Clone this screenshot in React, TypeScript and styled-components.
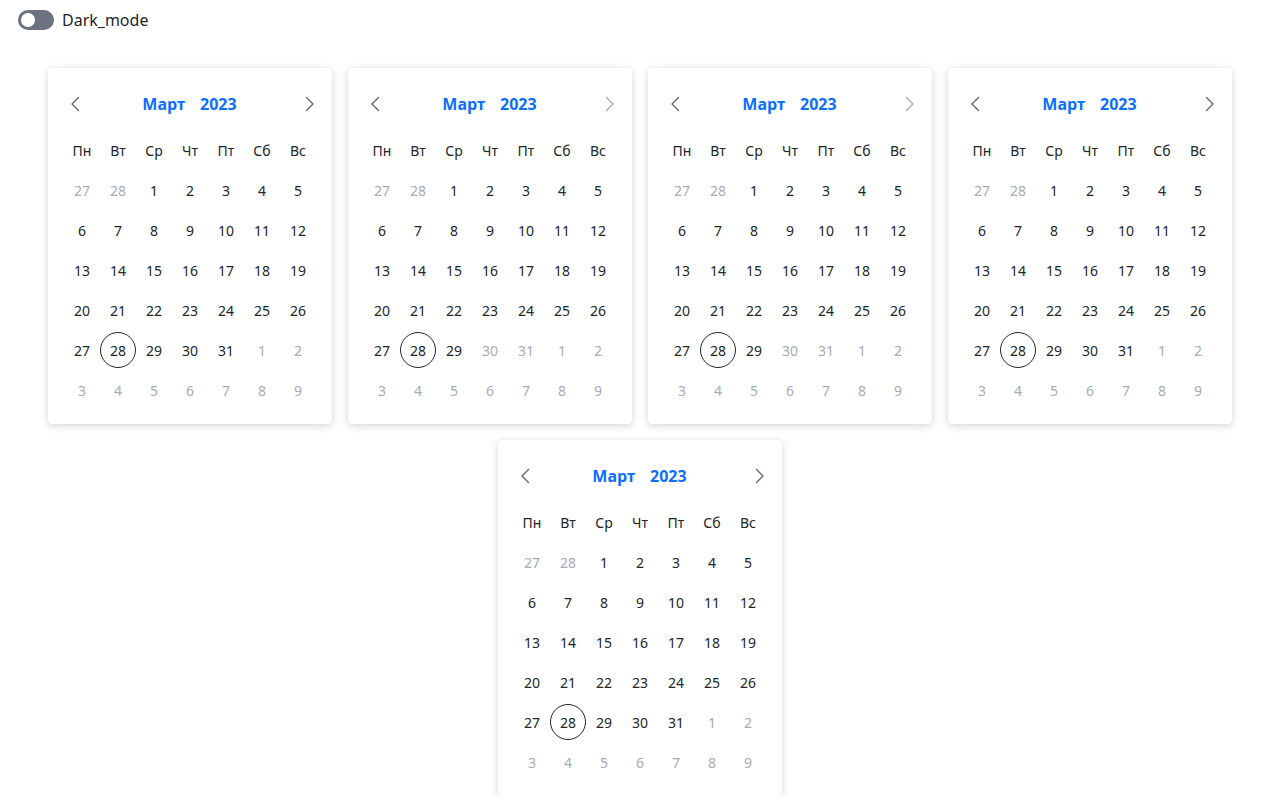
import React from "react";
import styled, { createGlobalStyle } from "styled-components";

const Global = createGlobalStyle`
  * { box-sizing: border-box; }
  body {
    margin: 0;
    background: #ffffff;
    font-family: "Noto Sans", "Open Sans", sans-serif;
    color: #212529;
  }
`;

const Page = styled.div`
  display: flex;
  flex-direction: column;
`;

const TopBar = styled.label`
  display: flex;
  align-items: center;
  gap: 8px;
  padding: 10px 18px;
  font-size: 16px;
  color: #212529;
  height: 40px;
`;

const Track = styled.span`
  position: relative;
  width: 36px;
  height: 20px;
  border-radius: 10px;
  background: #6b7280;
  display: inline-block;
`;

const Knob = styled.span`
  position: absolute;
  top: 3px;
  left: 3px;
  width: 14px;
  height: 14px;
  border-radius: 50%;
  background: #ffffff;
`;

const Grid = styled.div`
  display: flex;
  flex-wrap: wrap;
  justify-content: center;
  gap: 16px;
  padding-top: 28px;
`;

const Card = styled.div`
  width: 284px;
  background: #fff;
  border-radius: 4px;
  box-shadow: 0 2px 8px rgba(0, 0, 0, 0.16), 0 0 2px rgba(0, 0, 0, 0.06);
  padding: 16px 16px 14px;
`;

const Header = styled.div`
  height: 40px;
  display: grid;
  grid-template-columns: 22px 1fr 22px;
  align-items: center;
  margin: 0 -5px 6px 0;
`;

const NavBtn = styled.button<{ $disabled?: boolean }>`
  width: 22px;
  height: 24px;
  border: none;
  background: none;
  padding: 0;
  display: flex;
  align-items: center;
  justify-content: center;
  color: ${(p) => (p.$disabled ? "#a8adb6" : "#5f6675")};
  cursor: pointer;
`;

const Title = styled.div`
  display: flex;
  justify-content: center;
  gap: 15px;
  padding-right: 6px;
  font-weight: 700;
  font-size: 16px;
  color: #0d6efd;
`;

const Days = styled.div`
  display: grid;
  grid-template-columns: repeat(7, 36px);
  grid-auto-rows: 40px;
  align-items: center;
  justify-items: center;
`;

const WeekDay = styled.div`
  font-size: 14px;
  color: #212529;
`;

const Day = styled.div<{ $muted?: boolean; $today?: boolean }>`
  width: 36px;
  height: 36px;
  display: flex;
  align-items: center;
  justify-content: center;
  font-size: 14px;
  border-radius: 50%;
  color: ${(p) => (p.$muted ? "#a6abb4" : "#212529")};
  border: ${(p) => (p.$today ? "1px solid #212529" : "1px solid transparent")};
`;

const Chevron = ({ dir }: { dir: "left" | "right" }) => (
  <svg width="10" height="16" viewBox="0 0 10 16" fill="none">
    <path
      d={dir === "left" ? "M8.5 1.5 L2 8 L8.5 14.5" : "M1.5 1.5 L8 8 L1.5 14.5"}
      stroke="currentColor"
      strokeWidth="1.4"
      strokeLinecap="round"
      strokeLinejoin="round"
    />
  </svg>
);

const weekdays = ["Пн", "Вт", "Ср", "Чт", "Пт", "Сб", "Вс"];

type Cell = { n: number; muted: boolean; today?: boolean };

function buildDays(lastActive: number): Cell[] {
  const cells: Cell[] = [];
  cells.push({ n: 27, muted: true }, { n: 28, muted: true });
  for (let d = 1; d <= 31; d++) {
    cells.push({ n: d, muted: d > lastActive, today: d === 28 });
  }
  for (let d = 1; d <= 9; d++) cells.push({ n: d, muted: true });
  return cells;
}

const configs = [
  { last: 31, nextDisabled: false },
  { last: 29, nextDisabled: true },
  { last: 29, nextDisabled: true },
  { last: 31, nextDisabled: false },
  { last: 31, nextDisabled: false },
];

const Calendar = ({ last, nextDisabled }: { last: number; nextDisabled: boolean }) => (
  <Card>
    <Header>
      <NavBtn>
        <Chevron dir="left" />
      </NavBtn>
      <Title>
        <span>Март</span>
        <span>2023</span>
      </Title>
      <NavBtn $disabled={nextDisabled}>
        <Chevron dir="right" />
      </NavBtn>
    </Header>
    <Days>
      {weekdays.map((w) => (
        <WeekDay key={w}>{w}</WeekDay>
      ))}
      {buildDays(last).map((c, i) => (
        <Day key={i} $muted={c.muted} $today={c.today}>
          {c.n}
        </Day>
      ))}
    </Days>
  </Card>
);

export default function App() {
  return (
    <Page>
      <Global />
      <TopBar>
        <Track>
          <Knob />
        </Track>
        Dark_mode
      </TopBar>
      <Grid>
        {configs.map((c, i) => (
          <Calendar key={i} last={c.last} nextDisabled={c.nextDisabled} />
        ))}
      </Grid>
    </Page>
  );
}
